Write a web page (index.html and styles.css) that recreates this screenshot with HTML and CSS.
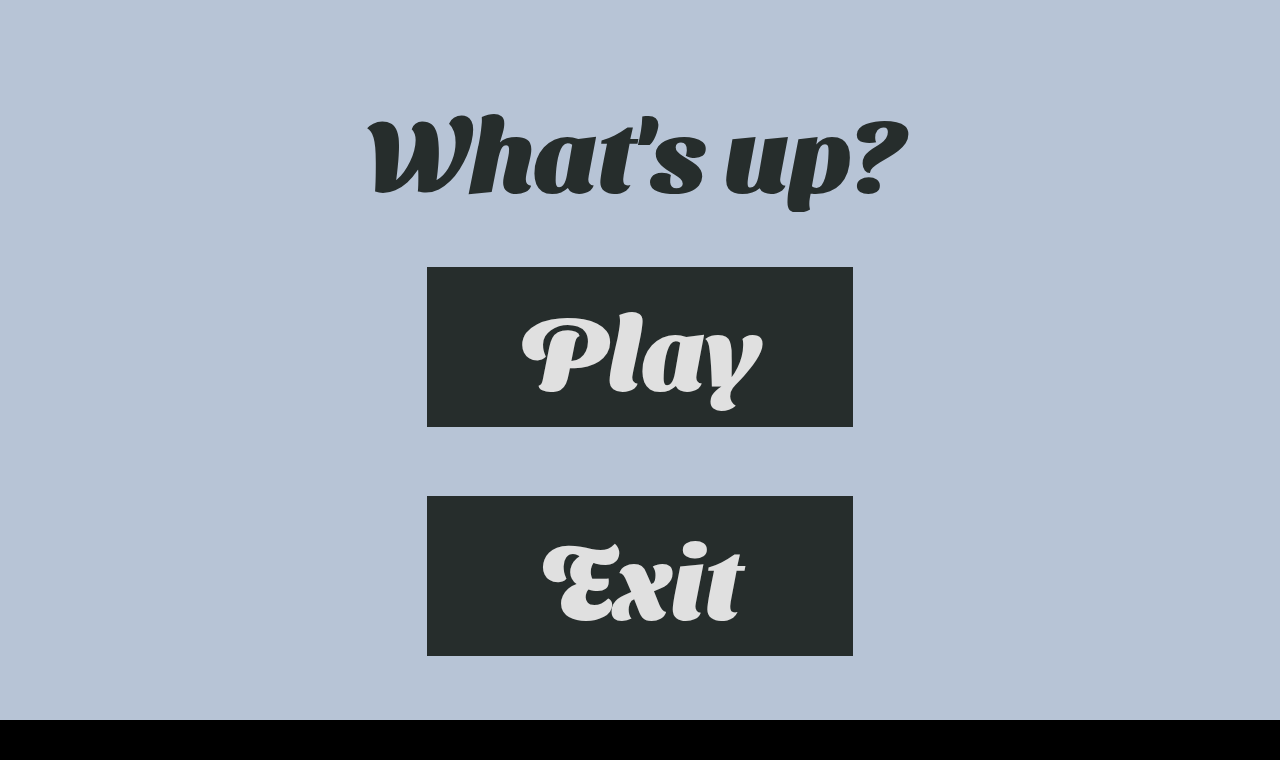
FILE: index.html
```html
<!DOCTYPE html>
<html lang="en">
	<head>
		<meta charset="utf-8" />
		<title>What's up?</title>
		<link rel="stylesheet" href="styles.css">
	</head>
	<body>
		<main class="menu">
			<h1 class="title">What's up?</h1>
			<button type="button" class="menu_button">Play</button>
			<button type="button" class="menu_button">Exit</button>
		</main>
	</body>
</html>
```

FILE: styles.css
```css
body {
	margin: 0;
	background-color: #000;
	font-family: "Sansita Swashed", "Liberation Serif", serif;
	font-weight: 900;
}

.menu {
	display: flex;
	flex-direction: column;
	align-items: center;
	padding: 86px 0 64px;
	background-color: #b7c4d6;
}

.title {
	margin: 0 0 55px;
	padding: 0 10px 0 0;
	overflow: hidden;
	color: #262d2c;
	font-size: 104px;
	font-weight: 900;
	line-height: 126px;
}

.menu_button {
	width: calc(100% / 3);
	height: 160px;
	margin: 0 0 69px;
	padding: 0;
	border: none;
	background-color: #262d2c;
	color: #e0e0e0;
	font: inherit;
	font-size: 104px;
	line-height: 140px;
	cursor: pointer;
}

.menu_button:last-child {
	margin-bottom: 0;
}
```
